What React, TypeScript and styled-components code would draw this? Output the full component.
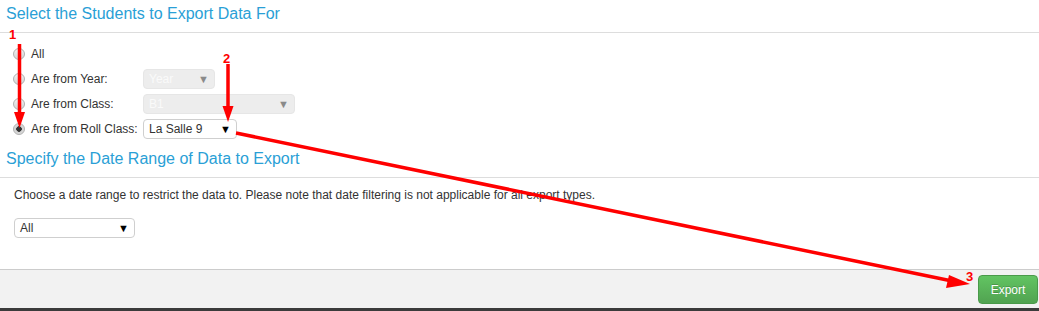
import styled, { createGlobalStyle } from "styled-components";

const GlobalStyle = createGlobalStyle`
  html, body {
    margin: 0;
    padding: 0;
    background: #fff;
  }
  body {
    font-family: "Liberation Sans", Arial, sans-serif;
    font-size: 12px;
    color: #333;
  }
`;

const Page = styled.div`
  position: relative;
  display: flex;
  flex-direction: column;
  height: 311px;
  overflow: hidden;
`;

const Main = styled.div`
  flex: 1;
`;

const SectionTitle = styled.h3<{ $gap?: number }>`
  margin: ${({ $gap }) => $gap ?? 0}px 0 0;
  padding: 4px 6px 0;
  height: 28px;
  line-height: 20px;
  font-size: 16px;
  font-weight: normal;
  color: #2a9fd6;
  border-bottom: 1px solid #ddd;
`;

const OptionList = styled.div`
  padding: 8px 0 0 13px;
`;

const OptionRow = styled.label`
  display: flex;
  align-items: center;
  height: 25px;
`;

const Radio = styled.span<{ $checked?: boolean }>`
  box-sizing: border-box;
  width: 12px;
  height: 12px;
  border-radius: 50%;
  border: 1px solid #b0b0b0;
  background: ${({ $checked }) =>
    $checked
      ? "radial-gradient(circle, #333 0 2.5px, #cfcfcf 3px, #e8e8e8 100%)"
      : "linear-gradient(#f2f2f2, #d4d4d4)"};
  margin-right: 6px;
  flex-shrink: 0;
`;

const OptionLabel = styled.span`
  width: 112px;
  flex-shrink: 0;
`;

const SelectBox = styled.div<{ $width: number; $disabled?: boolean }>`
  box-sizing: border-box;
  display: flex;
  align-items: center;
  justify-content: space-between;
  width: ${({ $width }) => $width}px;
  height: 20px;
  padding: 0 5px 0 5px;
  border-radius: 4px;
  border: 1px solid ${({ $disabled }) => ($disabled ? "#e6e6e6" : "#cfcfcf")};
  background: ${({ $disabled }) => ($disabled ? "#ededed" : "#fff")};
  color: ${({ $disabled }) => ($disabled ? "#fafafa" : "#333")};
  font-size: 12px;
`;

const Caret = styled.span<{ $disabled?: boolean }>`
  font-size: 11px;
  color: ${({ $disabled }) => ($disabled ? "#8a8a8a" : "#000")};
`;

const Description = styled.p`
  margin: 8px 0 0 14px;
  line-height: 18px;
`;

const DateRow = styled.div`
  margin: 14px 0 0 14px;
`;

const Footer = styled.div`
  display: flex;
  justify-content: flex-end;
  height: 42px;
  padding: 5px 1px 0 0;
  box-sizing: border-box;
  background: #f2f2f2;
  border-top: 1px solid #cccccc;
  border-bottom: 3px solid #3b3b3b;
`;

const ExportButton = styled.button`
  width: 60px;
  height: 29px;
  border-radius: 4px;
  border: 1px solid #4a9a4a;
  background: linear-gradient(#62c462, #51a351);
  color: #fff;
  font-family: "Liberation Sans", Arial, sans-serif;
  font-size: 12px;
  text-shadow: 0 -1px 0 rgba(0, 0, 0, 0.2);
  padding: 0;
`;

const Overlay = styled.svg`
  position: absolute;
  left: 0;
  top: 0;
  pointer-events: none;
`;

const Marker = styled.text`
  font-family: "Liberation Sans", Arial, sans-serif;
  font-weight: bold;
  font-size: 13px;
  fill: #ff0000;
`;

type Choice = {
  label: string;
  checked?: boolean;
  select?: { value: string; width: number; disabled?: boolean };
};

const choices: Choice[] = [
  { label: "All" },
  { label: "Are from Year:", select: { value: "Year", width: 72, disabled: true } },
  { label: "Are from Class:", select: { value: "B1", width: 152, disabled: true } },
  { label: "Are from Roll Class:", checked: true, select: { value: "La Salle 9", width: 94 } },
];

const Select = ({ value, width, disabled }: { value: string; width: number; disabled?: boolean }) => (
  <SelectBox $width={width} $disabled={disabled}>
    <span>{value}</span>
    <Caret $disabled={disabled}>▼</Caret>
  </SelectBox>
);

const Annotations = () => (
  <Overlay width="1039" height="311" viewBox="0 0 1039 311">
    <g stroke="#ff0000" strokeWidth="3.5" fill="none">
      <line x1="19.5" y1="44" x2="19.5" y2="116" />
      <line x1="228" y1="64" x2="228" y2="110" />
      <line x1="236" y1="133" x2="952" y2="281" />
    </g>
    <g fill="#ff0000">
      <polygon points="14,112 25,112 19.5,128" />
      <polygon points="222.5,106 233.5,106 228,122" />
      <polygon points="949,275 970,284 946,288" />
    </g>
    <Marker x="9" y="39">1</Marker>
    <Marker x="223" y="63">2</Marker>
    <Marker x="966" y="281">3</Marker>
  </Overlay>
);

const App = () => {
  return (
    <Page>
      <GlobalStyle />
      <Main>
        <SectionTitle>Select the Students to Export Data For</SectionTitle>
        <OptionList>
          {choices.map((c) => (
            <OptionRow key={c.label}>
              <Radio $checked={c.checked} />
              <OptionLabel>{c.label}</OptionLabel>
              {c.select && <Select {...c.select} />}
            </OptionRow>
          ))}
        </OptionList>
        <SectionTitle $gap={4}>Specify the Date Range of Data to Export</SectionTitle>
        <Description>
          Choose a date range to restrict the data to. Please note that date filtering is not applicable for all
          export types.
        </Description>
        <DateRow>
          <Select value="All" width={121} />
        </DateRow>
      </Main>
      <Footer>
        <ExportButton>Export</ExportButton>
      </Footer>
      <Annotations />
    </Page>
  );
};

export default App;
